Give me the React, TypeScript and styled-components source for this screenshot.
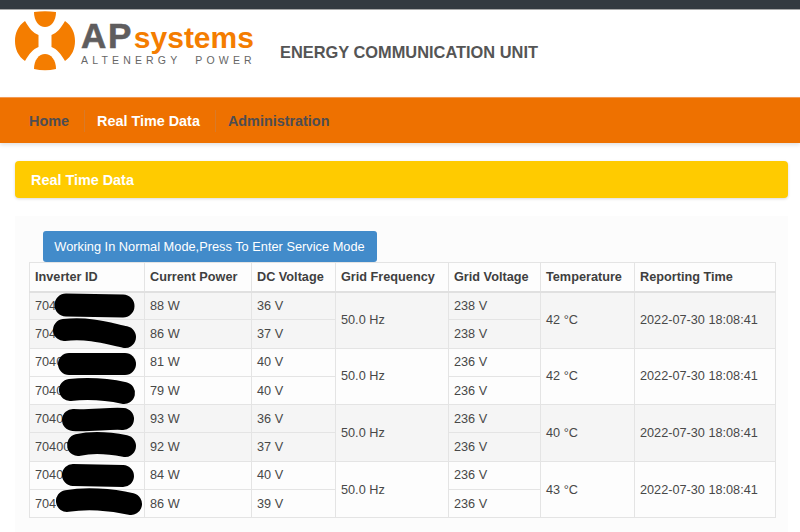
import React from "react";
import styled, { createGlobalStyle } from "styled-components";

const Global = createGlobalStyle`
  html, body { margin: 0; padding: 0; background: #fff; overflow: hidden; }
  body { font-family: "Liberation Sans", Arial, sans-serif; color: #444; }
`;
const Page = styled.div`width: 800px; height: 532px; overflow: hidden;`;
const TopBar = styled.div`height: 9px; background: #343a40; border-bottom: 1px solid #a9a9a9;`;
const Header = styled.header`height: 87px; display: flex; align-items: flex-start;`;
const Logo = styled.div`display: flex; align-items: flex-start; margin-left: 15px; width: 265px; color: #5f5f5f;`;
const LogoWords = styled.div`display: flex; flex-direction: column; margin-left: 5px; padding-top: 8px;`;
const LogoName = styled.div`display: flex; align-items: baseline; height: 36px; line-height: 36px;`;
const LogoAP = styled.span`font-size: 35px; font-weight: 700; letter-spacing: 1.6px; color: #5f5d5e; -webkit-text-stroke: .6px #5f5d5e;`;
const LogoSystems = styled.span`font-size: 30px; font-weight: 700; color: #f47d00; margin-left: 1px;`;
const LogoTag = styled.div`font-size: 10.5px; letter-spacing: 4.17px; color: #666; line-height: 12px; white-space: pre;`;
const Title = styled.h1`margin: 32px 0 0; font-size: 16.4px; font-weight: 700; line-height: 20px; color: #555;`;
const Nav = styled.nav`
  height: 46px; background: #ee7100; border-top: 1px solid #f29a55; box-sizing: border-box;
  display: flex; align-items: center; padding-left: 17px; box-shadow: 0 2px 4px rgba(0,0,0,.12);
`;
const NavItem = styled.a<{ $active?: boolean; $sep?: boolean }>`
  font-size: 14.4px; font-weight: 700; line-height: 22px; padding: 0 15px 0 12px;
  height: 22px;
  color: ${p => (p.$active ? "#fff" : "#4d4d52")};
  border-right: ${p => (p.$sep ? "1px solid #d97a28" : "none")};
`;
const Content = styled.main`padding: 18px 12px 0 15px;`;
const Banner = styled.div`
  height: 37px; background: #ffcb00; border-radius: 4px; padding-left: 16px;
  display: flex; align-items: center; color: #fff; font-size: 14.4px; font-weight: 700;
  box-shadow: 0 1px 3px rgba(0,0,0,.15);
`;
const Panel = styled.section`margin-top: 18px; background: #fcfcfc; padding: 15px 13px 0 14px; height: 316px;`;
const ModeButton = styled.button`
  display: block; margin-left: 13.5px; width: 334px; height: 31px; border: 0; border-radius: 3px;
  background: #428bca; color: #fff; font: 12.8px/31px "Liberation Sans", Arial, sans-serif; padding: 0;
`;
const Table = styled.table`
  width: 746px; table-layout: fixed; border-collapse: collapse; font-size: 12.7px; color: #484848;
  border: 1px solid #e4e4e4;
`;
const HeadCell = styled.th`
  height: 29px; padding: 0 5px; box-sizing: border-box; text-align: left; font-weight: 700; font-size: 12.7px;
  color: #3f3f3f; background: #fdfdfd; border: 1px solid #e4e4e4; border-bottom: 2px solid #e0e0e0; white-space: nowrap;
`;
const Row = styled.tr<{ $striped: boolean }>`background: ${p => (p.$striped ? "#f5f5f5" : "#fdfdfd")};`;
const Cell = styled.td`
  height: 28.3px; padding: 0 5px; box-sizing: border-box; border: 1px solid #e4e4e4; white-space: nowrap;
`;
const IdCell = styled(Cell)`position: relative;`;
const Scribble = styled.svg`position: absolute; left: 0; top: 0; overflow: visible; pointer-events: none;`;

const heads: [string, number][] = [
  ["Inverter ID", 115], ["Current Power", 107], ["DC Voltage", 84], ["Grid Frequency", 113],
  ["Grid Voltage", 92], ["Temperature", 94], ["Reporting Time", 141],
];

const groups = [
  { temp: "42 °C", rows: [
    { id: "704", p: "88 W", dc: "36 V", g: "238 V", s: "M36,12 L93,13", w: 23 },
    { id: "704", p: "86 W", dc: "37 V", g: "238 V", s: "M34,10 C60,7 80,14 95,17", w: 22 },
  ]},
  { temp: "42 °C", rows: [
    { id: "7040", p: "81 W", dc: "40 V", g: "236 V", s: "M39,15 L95,15", w: 22 },
    { id: "7040", p: "79 W", dc: "40 V", g: "236 V", s: "M40,13 C60,11 80,13 94,16", w: 22 },
  ]},
  { temp: "40 °C", rows: [
    { id: "7040", p: "93 W", dc: "36 V", g: "236 V", s: "M43,15 C60,16 80,13 93,14", w: 22 },
    { id: "70400", p: "92 W", dc: "37 V", g: "236 V", s: "M48,12 C65,8 80,10 95,13", w: 22 },
  ]},
  { temp: "43 °C", rows: [
    { id: "7040", p: "84 W", dc: "40 V", g: "236 V", s: "M43,13 L93,14", w: 22 },
    { id: "704", p: "86 W", dc: "39 V", g: "236 V", s: "M37,11 C55,8 80,9 101,14", w: 22 },
  ]},
];

const LogoMark = () => (
  <svg width="61" height="60" viewBox="15 11 61 60" style={{ marginTop: 1, flex: "none" }}>
    <g fill="#f47d00">
      <path d="M34,12 Q45,10.5 56,12 C56,21 51,27 45,27 C39,27 34,21 34,12Z" />
      <path d="M34,69 C34,60 39,54 45,54 C51,54 56,60 56,69 Q45,71.5 34,69Z" />
      <path d="M25,21 C29,28 33,33 38.5,35 V47 C33,49 29,54 25,61 C18,56 15,49 15,41 C15,33 18,26 25,21Z" />
      <path d="M65,21 C61,28 57,33 51.5,35 V47 C57,49 61,54 65,61 C72,56 75,49 75,41 C75,33 72,26 65,21Z" />
    </g>
  </svg>
);

export default function App() {
  return (
    <Page>
      <Global />
      <TopBar />
      <Header>
        <Logo>
          <LogoMark />
          <LogoWords>
            <LogoName><LogoAP>AP</LogoAP><LogoSystems>systems</LogoSystems></LogoName>
            <LogoTag>ALTENERGY  POWER</LogoTag>
          </LogoWords>
        </Logo>
        <Title>ENERGY COMMUNICATION UNIT</Title>
      </Header>
      <Nav>
        <NavItem $sep>Home</NavItem>
        <NavItem $active $sep>Real Time Data</NavItem>
        <NavItem>Administration</NavItem>
      </Nav>
      <Content>
        <Banner>Real Time Data</Banner>
        <Panel>
          <ModeButton>Working In Normal Mode,Press To Enter Service Mode</ModeButton>
          <Table>
            <colgroup>{heads.map(([h, w]) => <col key={h} width={w} />)}</colgroup>
            <thead><tr>{heads.map(([h]) => <HeadCell key={h}>{h}</HeadCell>)}</tr></thead>
            <tbody>
              {groups.flatMap((g, gi) =>
                g.rows.map((r, ri) => (
                  <Row key={`${gi}-${ri}`} $striped={gi % 2 === 0}>
                    <IdCell>
                      {r.id}
                      <Scribble width="116" height="28">
                        <path d={r.s} fill="none" stroke="#000" strokeWidth={r.w} strokeLinecap="round" />
                      </Scribble>
                    </IdCell>
                    <Cell>{r.p}</Cell>
                    <Cell>{r.dc}</Cell>
                    {ri === 0 && <Cell rowSpan={2}>50.0 Hz</Cell>}
                    <Cell>{r.g}</Cell>
                    {ri === 0 && <Cell rowSpan={2}>{g.temp}</Cell>}
                    {ri === 0 && <Cell rowSpan={2}>2022-07-30 18:08:41</Cell>}
                  </Row>
                ))
              )}
            </tbody>
          </Table>
        </Panel>
      </Content>
    </Page>
  );
}
